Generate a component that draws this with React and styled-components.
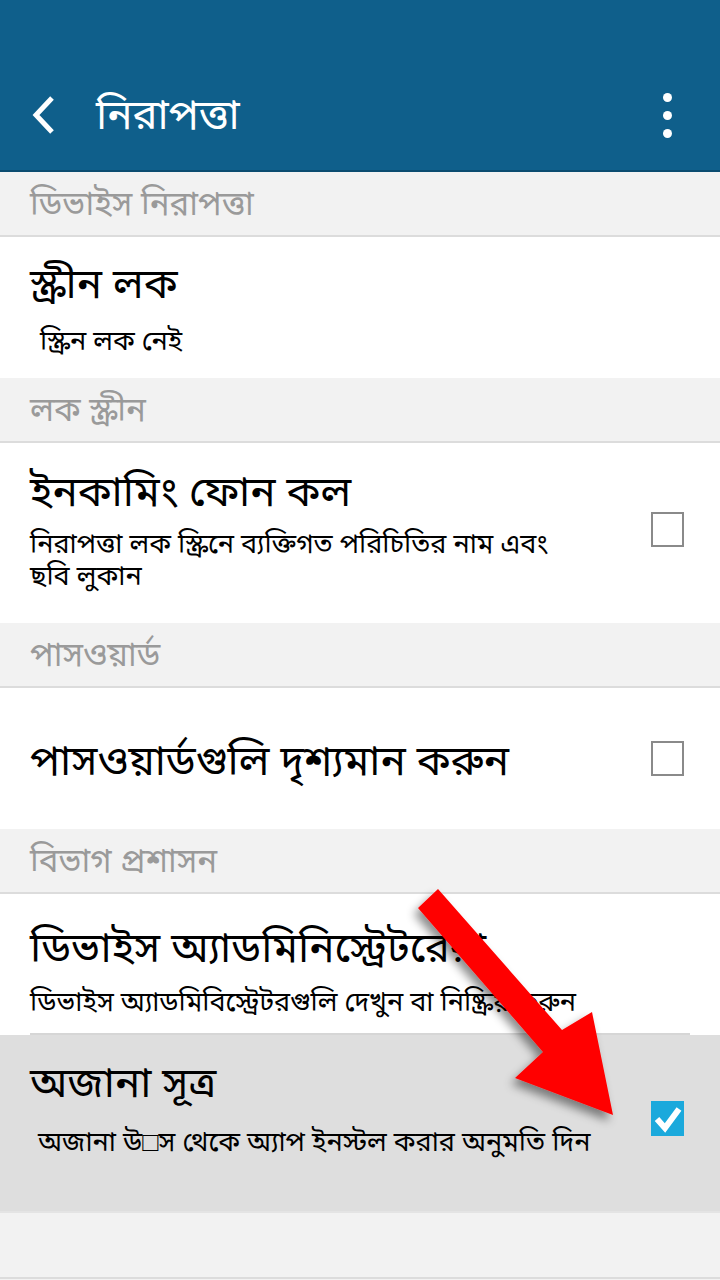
import styled, { createGlobalStyle } from "styled-components";

const GlobalStyle = createGlobalStyle`
  html, body {
    margin: 0;
    padding: 0;
    background: #f2f2f2;
    font-family: "Noto Sans", "Noto Sans Bengali", "Lohit Bengali", sans-serif;
  }
  * { box-sizing: border-box; }
`;

const Screen = styled.div`
  position: relative;
  width: 720px;
  height: 1280px;
  overflow: hidden;
  background: #f2f2f2;
`;

const TopBar = styled.header`
  height: 172px;
  padding-top: 60px;
  background: #0f5f8b;
  border-bottom: 2px solid #0b4c70;
`;

const BarRow = styled.div`
  height: 110px;
  display: flex;
  align-items: center;
  padding: 0 24px 0 28px;
`;

const BackButton = styled.div`
  width: 40px;
  height: 44px;
  display: flex;
  align-items: center;
`;

const Title = styled.h1`
  flex: 1;
  margin: 0 0 0 28px;
  color: #fff;
  font-size: 42px;
  font-weight: 400;
`;

const MenuDots = styled.div`
  display: flex;
  flex-direction: column;
  gap: 9px;
  padding-right: 24px;
  span {
    width: 9px;
    height: 9px;
    border-radius: 50%;
    background: #fff;
  }
`;

const SectionHeader = styled.div`
  height: 65px;
  display: flex;
  align-items: center;
  padding-left: 30px;
  background: #f2f2f2;
  border-bottom: 2px solid #dcdcdc;
  color: #9a9a9a;
  font-size: 33px;
`;

const Item = styled.div`
  position: relative;
  height: ${(p) => p.height}px;
  display: flex;
  align-items: ${(p) => (p.pad ? "flex-start" : "center")};
  padding: ${(p) => p.pad || 0}px 36px 0 30px;
  background: ${(p) => (p.active ? "#dedede" : "#fff")};
`;

const ItemText = styled.div`
  flex: 1;
  display: flex;
  flex-direction: column;
`;

const ItemTitle = styled.div`
  color: #000;
  font-size: 42px;
  font-weight: 400;
  line-height: 50px;
  white-space: nowrap;
`;

const ItemSub = styled.div`
  margin-top: ${(p) => p.gap || 10}px;
  padding-left: ${(p) => p.indent || 0}px;
  color: #000;
  font-size: 27px;
  line-height: 32px;
  max-width: ${(p) => (p.wrap ? "540px" : "none")};
  white-space: ${(p) => (p.wrap ? "normal" : "nowrap")};
`;

const InnerDivider = styled.div`
  position: absolute;
  left: 30px;
  right: 30px;
  bottom: 0;
  height: 2px;
  background: #d6d6d6;
`;

const Box = styled.div`
  width: 33px;
  height: 35px;
  flex-shrink: 0;
  margin-top: ${(p) => p.offset || 0}px;
  border: 2px solid ${(p) => (p.checked ? "#1ba9dc" : "#8a8a8a")};
  background: ${(p) => (p.checked ? "#1ba9dc" : "transparent")};
  display: flex;
  align-items: center;
  justify-content: center;
`;

const Footer = styled.div`
  height: 68px;
  border-top: 2px solid #e4e4e4;
  border-bottom: 2px solid #dcdcdc;
  background: #f2f2f2;
`;

const ArrowLayer = styled.svg`
  position: absolute;
  left: 0;
  top: 0;
  pointer-events: none;
`;

const Checkbox = ({ checked, offset }) => (
  <Box checked={checked} offset={offset}>
    {checked && (
      <svg width="28" height="28" viewBox="0 0 28 28">
        <path d="M3 14 L11 23 L25 4" fill="none" stroke="#fff" strokeWidth="6" />
      </svg>
    )}
  </Box>
);

export default function App() {
  return (
    <Screen>
      <GlobalStyle />
      <TopBar>
        <BarRow>
          <BackButton>
            <svg width="30" height="40" viewBox="0 0 30 40">
              <path d="M24 3 L8 20 L24 37" fill="none" stroke="#fff" strokeWidth="5" />
            </svg>
          </BackButton>
          <Title>নিরাপত্তা</Title>
          <MenuDots>
            <span />
            <span />
            <span />
          </MenuDots>
        </BarRow>
      </TopBar>

      <SectionHeader>ডিভাইস নিরাপত্তা</SectionHeader>
      <Item height={141} pad={20}>
        <ItemText>
          <ItemTitle>স্ক্রীন লক</ItemTitle>
          <ItemSub indent={10} gap={17}>স্ক্রিন লক নেই</ItemSub>
        </ItemText>
      </Item>

      <SectionHeader>লক স্ক্রীন</SectionHeader>
      <Item height={180} pad={22}>
        <ItemText>
          <ItemTitle>ইনকামিং ফোন কল</ItemTitle>
          <ItemSub gap={12} wrap>নিরাপত্তা লক স্ক্রিনে ব্যক্তিগত পরিচিতির নাম এবং ছবি লুকান</ItemSub>
        </ItemText>
        <Checkbox offset={47} />
      </Item>

      <SectionHeader>পাসওয়ার্ড</SectionHeader>
      <Item height={141}>
        <ItemText>
          <ItemTitle>পাসওয়ার্ডগুলি দৃশ্যমান করুন</ItemTitle>
        </ItemText>
        <Checkbox />
      </Item>

      <SectionHeader>বিভাগ প্রশাসন</SectionHeader>
      <Item height={141} pad={27}>
        <ItemText>
          <ItemTitle>ডিভাইস অ্যাডমিনিস্ট্রেটরেরা</ItemTitle>
          <ItemSub gap={14}>ডিভাইস অ্যাডমিবিস্ট্রেটরগুলি দেখুন বা নিষ্ক্রিয় করুন</ItemSub>
        </ItemText>
        <InnerDivider />
      </Item>
      <Item height={176} pad={21} active>
        <ItemText>
          <ItemTitle>অজানা সূত্র</ItemTitle>
          <ItemSub indent={8} gap={19}>অজানা উ□স থেকে অ্যাপ ইনস্টল করার অনুমতি দিন</ItemSub>
        </ItemText>
        <Checkbox checked offset={45} />
      </Item>
      <Footer />

      <ArrowLayer width="720" height="1280" viewBox="0 0 720 1280">
        <defs>
          <filter id="shade" x="-20%" y="-20%" width="140%" height="140%">
            <feDropShadow dx="-4" dy="6" stdDeviation="5" floodColor="#000" floodOpacity="0.45" />
          </filter>
        </defs>
        <polygon
          points="418,908 438,889 562,1030 592,1012 613,1115 515,1078 543,1052"
          fill="#ff0000"
          filter="url(#shade)"
        />
      </ArrowLayer>
    </Screen>
  );
}
